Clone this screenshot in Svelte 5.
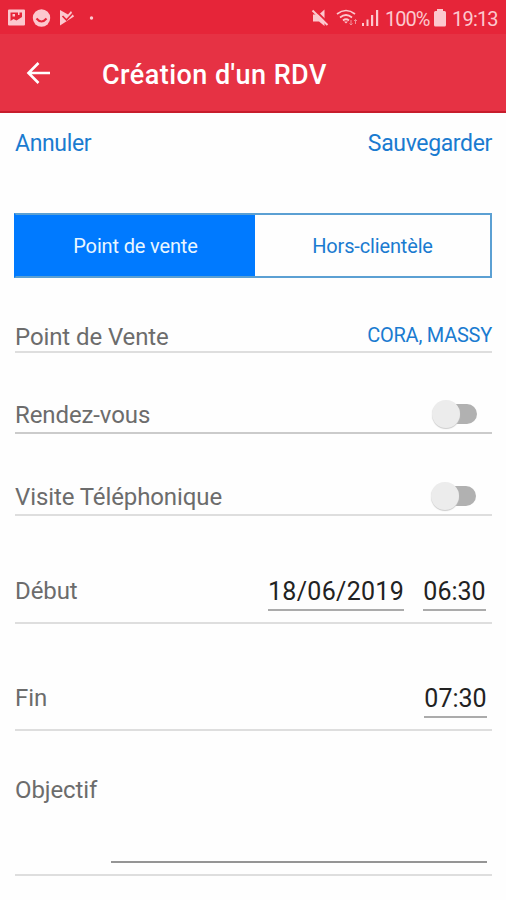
<script>
    let kind = $state('pdv');
    let appointment = $state(false);
    let phoneVisit = $state(false);
</script>

<div class="status-bar">
    <div class="notifications">
        <svg width="100" height="20" viewBox="0 0 100 20">
            <path fill-rule="evenodd" d="M9 .5h15q1 0 1 1v14q0 1-1 1H9q-1 0-1-1v-14q0-1 1-1zM10.500 3.500v8.500l3-2 3 1.500 5.500-3.500V3.500z" />
            <path d="M12.500 5H15v2.500h-2.500zM18 3h1.500v3H18z" />
            <circle cx="41.500" cy="9" r="8.700" />
            <path class="smile" d="M36.500 9.500q5 6 10 0" />
            <path d="M60 1l8 4.500 3-3.500 3 5.500-14 9z" />
            <path class="smile thin" d="M62.500 7l4 4 7-7.500" />
            <circle cx="91.500" cy="9" r="1.700" />
        </svg>
    </div>
    <div class="system">
        <svg width="70" height="20" viewBox="0 0 70 20">
            <path d="M3 5.500h6L14.500.5V17L9 12.500H3z" />
            <path class="cut" d="M4.500.5l14 14" />
            <path class="stroke" d="M2.500 1.500l15 14.500" />
            <path class="stroke thin" d="M27 5q9-7 18 0M30 8.500q6-5 12 0M33 11.500q3-2.500 6 0" />
            <path d="M34 12.500l2 2 2-2z" />
            <path class="arrows" d="M41 11v5M39.500 14.500L41 16l1.500-1.500M45.500 15v-4.500M44 12l1.500-1.500L47 12" />
            <path d="M52 14h2v3h-2zM56.500 10.500h2v6.500h-2zM61 6h2.200v11H61zM66 1h2.200v16H66z" />
        </svg>
        <span class="battery">100%</span>
        <svg width="12" height="18" viewBox="0 0 12 18">
            <path d="M3 0h6v2h1.500Q12 2 12 3.500V16q0 1.500-1.500 1.500h-9Q0 17.500 0 16V3.500Q0 2 1.500 2H3z" />
        </svg>
        <span class="clock">19:13</span>
    </div>
</div>

<header>
    <button class="back" aria-label="Retour">
        <svg width="26" height="24" viewBox="0 0 26 24">
            <path d="M24 12H3M12.500 2L2.500 12l10 10" />
        </svg>
    </button>
    <h1>Création d'un RDV</h1>
</header>

<main>
    <div class="actions">
        <button>Annuler</button>
        <button>Sauvegarder</button>
    </div>

    <div class="tabs">
        <button class:active={kind === 'pdv'} onclick={() => (kind = 'pdv')}>Point de vente</button>
        <button class:active={kind === 'hors'} onclick={() => (kind = 'hors')}>Hors-clientèle</button>
    </div>

    <div class="row store">
        <span class="label">Point de Vente</span>
        <button class="store-name">CORA, MASSY</button>
    </div>

    <div class="row toggle-row">
        <span class="label">Rendez-vous</span>
        <button class="switch" class:on={appointment} aria-label="Rendez-vous" onclick={() => (appointment = !appointment)}></button>
    </div>

    <div class="row toggle-row phone">
        <span class="label">Visite Téléphonique</span>
        <button class="switch" class:on={phoneVisit} aria-label="Visite Téléphonique" onclick={() => (phoneVisit = !phoneVisit)}></button>
    </div>

    <div class="row date-row">
        <span class="label">Début</span>
        <span class="value date">18/06/2019</span>
        <span class="value time">06:30</span>
    </div>

    <div class="row date-row end">
        <span class="label">Fin</span>
        <span class="value time">07:30</span>
    </div>

    <div class="row goal">
        <span class="label">Objectif</span>
        <input type="text" aria-label="Objectif" />
    </div>
</main>

<style>
    :global(body) {
        margin: 0;
        background: #fefefe;
        font-family: Roboto, sans-serif;
    }

    button {
        padding: 0;
        border: 0;
        background: none;
        font: inherit;
        letter-spacing: inherit;
        color: #1a7bd0;
    }

    .status-bar {
        display: flex;
        justify-content: space-between;
        box-sizing: border-box;
        height: 34px;
        padding: 9px 8px 0 0;
        background: #e62539;
        color: #fcc8ce;
        font-size: 20px;
        line-height: 20px;
    }

    .status-bar svg {
        display: block;
        fill: #fcc8ce;
    }

    .status-bar .smile,
    .status-bar .cut {
        fill: none;
        stroke: #e62539;
        stroke-width: 2;
    }

    .status-bar .stroke {
        fill: none;
        stroke: #fcc8ce;
        stroke-width: 2;
    }

    .status-bar .thin {
        stroke-width: 1.7;
    }

    .status-bar .arrows {
        fill: none;
        stroke: #f28e99;
        stroke-width: 1;
    }

    .system {
        display: flex;
    }

    .battery {
        width: 44px;
        margin: 0 5px;
        letter-spacing: -1px;
    }

    .clock {
        width: 46px;
        margin-left: 6px;
        letter-spacing: -0.8px;
    }

    header {
        display: flex;
        align-items: center;
        box-sizing: border-box;
        height: 79px;
        border-bottom: 2px solid #c71d2c;
        background: #e63244;
        color: #fff;
    }

    .back {
        width: 26px;
        height: 24px;
        margin: 0 50px 0 26px;
    }

    .back svg {
        display: block;
        fill: none;
        stroke: #fff;
        stroke-width: 2.6;
    }

    h1 {
        margin: 0;
        padding-top: 4px;
        font-size: 27px;
        font-weight: 500;
        line-height: 32px;
        letter-spacing: 0.45px;
    }

    main {
        padding: 0 14px 0 15px;
    }

    .actions {
        display: flex;
        justify-content: space-between;
        height: 100px;
        font-size: 23px;
        line-height: 62px;
        letter-spacing: -0.35px;
    }

    .actions button {
        height: 62px;
    }

    .tabs {
        display: grid;
        grid-template-columns: 239px 1fr;
        box-sizing: border-box;
        height: 65px;
        margin-left: -1px;
        border: 2px solid #5ba0d3;
        border-left-color: #007aff;
        font-size: 20px;
        letter-spacing: -0.15px;
    }

    .tabs button {
        padding-top: 1px;
    }

    .tabs .active {
        background: #007aff;
        color: #e9f6ff;
    }

    .row {
        display: flex;
        justify-content: space-between;
        box-sizing: border-box;
        border-bottom: 2px solid #dedede;
    }

    .label {
        color: #6c6c6c;
        font-size: 24px;
        line-height: 30px;
        letter-spacing: -0.1px;
    }

    .store {
        align-items: flex-end;
        height: 75px;
    }

    .store .label {
        line-height: 28px;
    }

    .store-name {
        font-size: 20px;
        line-height: 31px;
        letter-spacing: -0.25px;
    }

    .toggle-row {
        align-items: flex-end;
        height: 81px;
        padding-bottom: 2px;
        border-color: #cbcbcb;
    }

    .toggle-row.phone {
        height: 82px;
        border-color: #dedede;
    }

    .switch {
        position: relative;
        width: 34px;
        height: 20px;
        margin: 0 15px 6px 0;
        border-radius: 10px;
        background: #b1b1b1;
    }

    .phone .switch {
        margin-right: 16px;
    }

    .switch::before {
        content: '';
        position: absolute;
        top: -4px;
        left: -11px;
        width: 28px;
        height: 28px;
        border-radius: 50%;
        background: #ececec;
        box-shadow: 0 1px 1px #ccc;
    }

    .switch.on::before {
        left: 16px;
    }

    .date-row {
        height: 108px;
        padding-top: 60px;
    }

    .date-row .label {
        flex: 1;
    }

    .value {
        box-sizing: border-box;
        height: 35px;
        border-bottom: 2px solid #ababab;
        color: #222;
        font-size: 25px;
        line-height: 32px;
        text-align: center;
        white-space: nowrap;
    }

    .date {
        width: 136px;
        margin-right: 19px;
        letter-spacing: 0.3px;
    }

    .time {
        width: 63px;
        margin-right: 6px;
    }

    .end {
        height: 107px;
        padding-top: 59px;
    }

    .end .time {
        margin-right: 5px;
    }

    .goal {
        height: 145px;
        padding-top: 44px;
    }

    .goal input {
        box-sizing: border-box;
        width: 376px;
        height: 88px;
        margin-right: 5px;
        padding: 50px 4px 4px;
        border: 0;
        border-bottom: 2px solid #959595;
        outline: none;
        background: none;
        font: 24px Roboto, sans-serif;
    }
</style>
